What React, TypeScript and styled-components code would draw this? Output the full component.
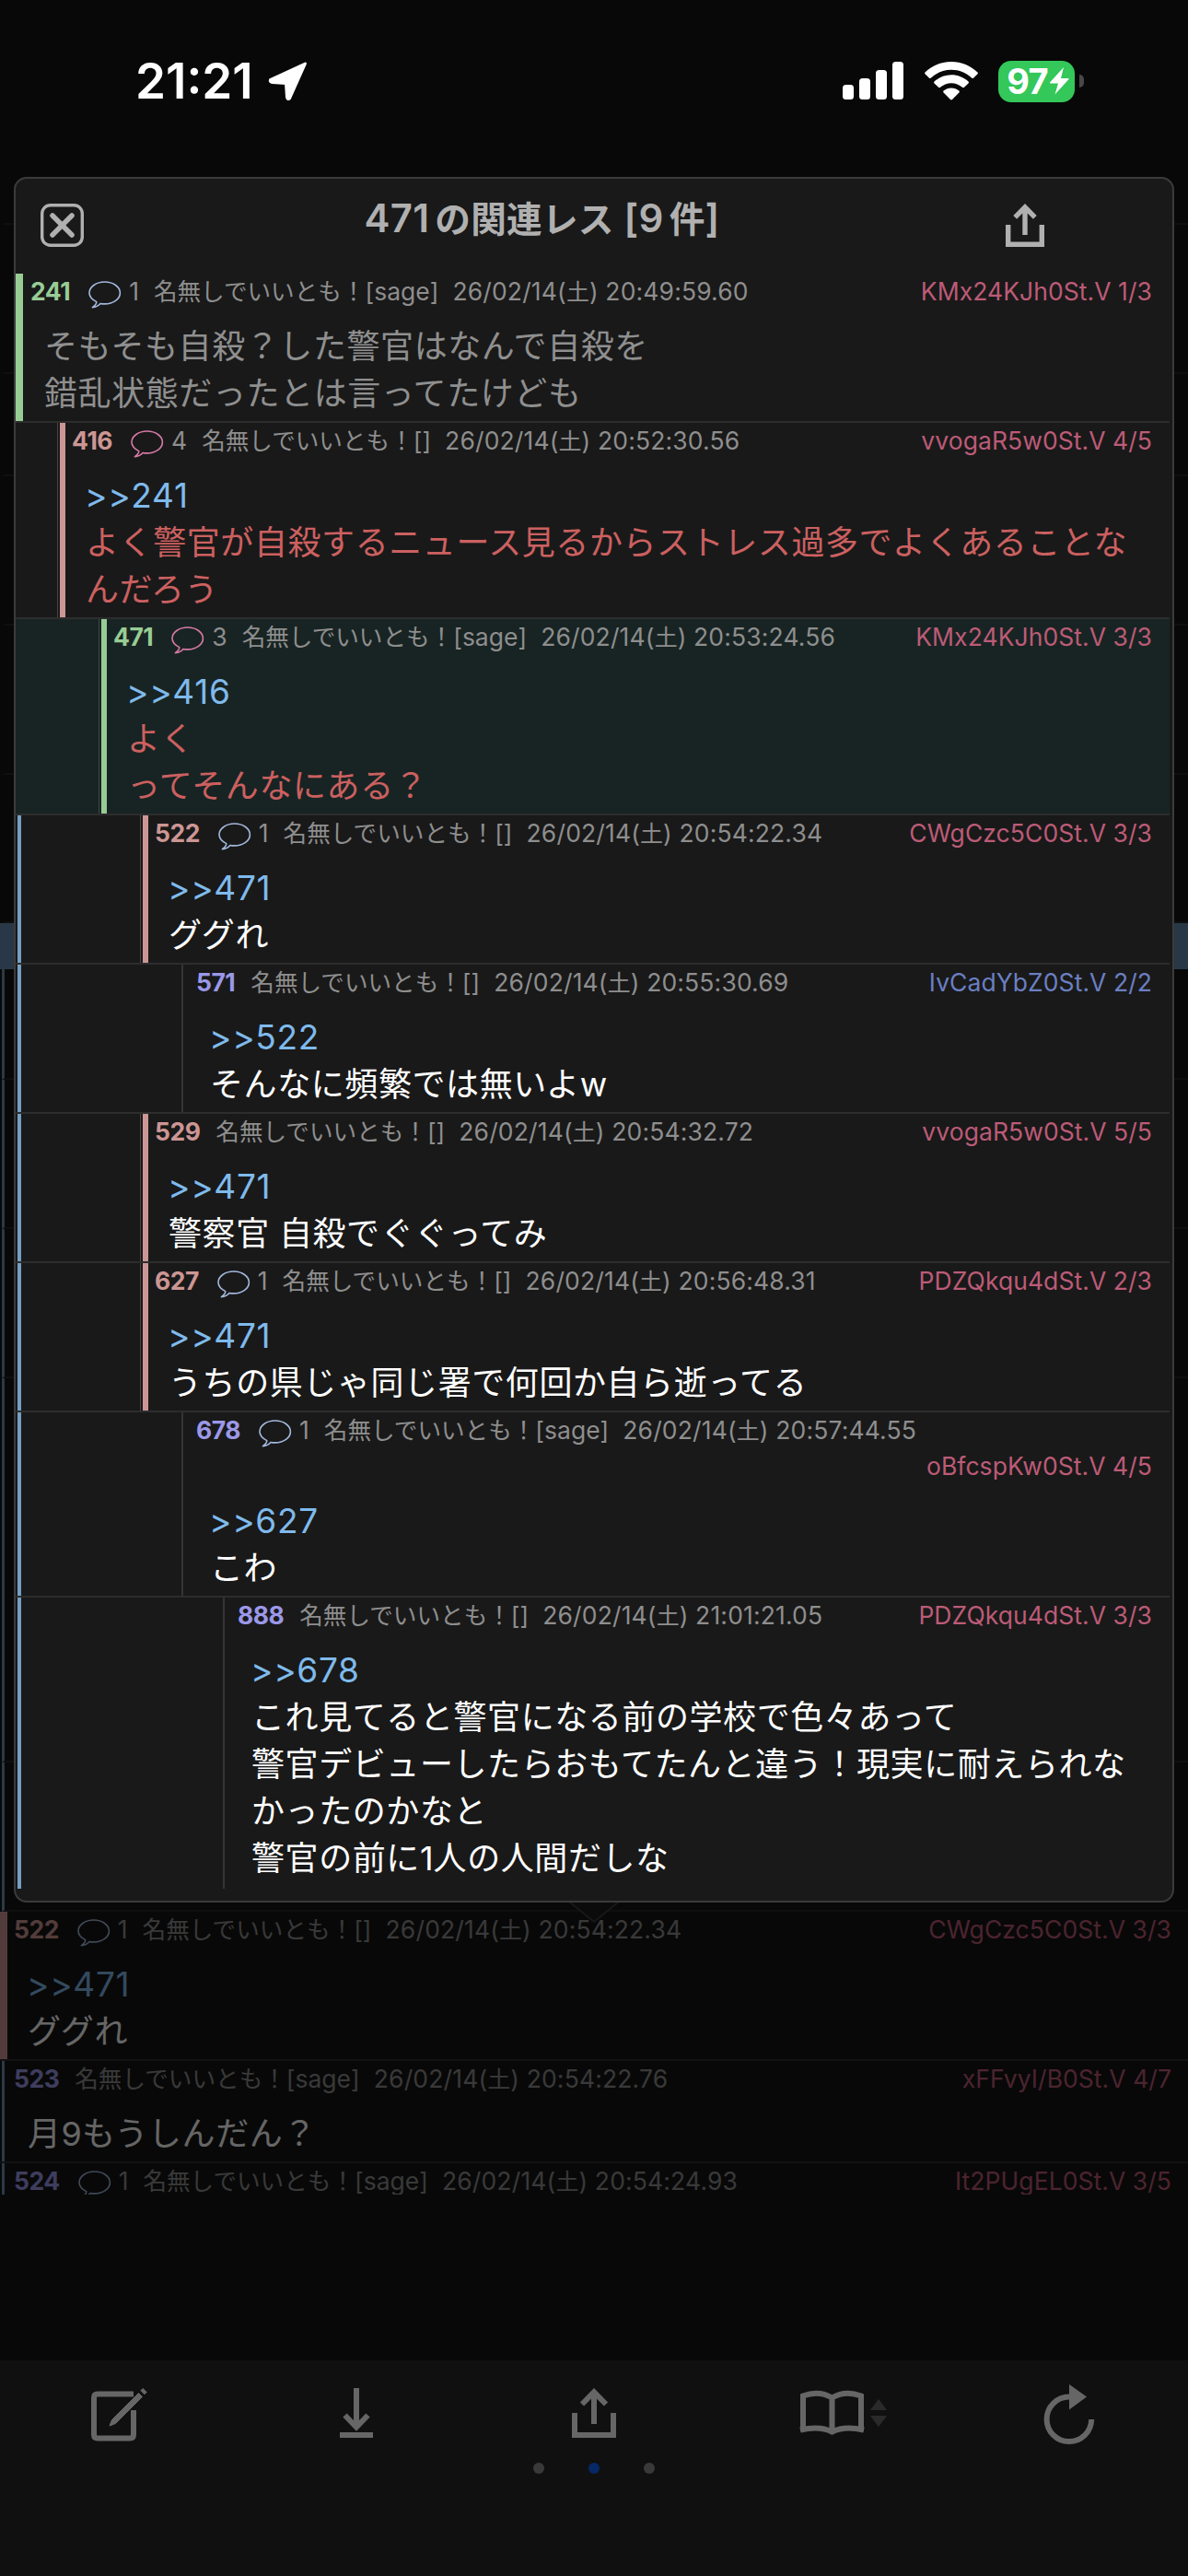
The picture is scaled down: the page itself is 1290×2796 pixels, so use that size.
import React from "react";
import styled, { createGlobalStyle } from "styled-components";

const GlobalStyle = createGlobalStyle`
  * { box-sizing: border-box; }
  html, body { margin: 0; padding: 0; background: #000; }
  body { font-family: Inter, "Noto Sans CJK JP", sans-serif; }
`;

const color = {
  green: "#98cc95",
  rose: "#cc9694",
  violet: "#9b98e8",
  idPink: "#bc5b77",
  idBlue: "#6b7fc2",
  link: "#7fbaec",
  red: "#cc6060",
  read: "#8f8f8f",
  unread: "#ffffff",
  meta: "#8e8e8e",
  panel: "#191919",
  bubbleBlue: "#a3b8dc",
  bubblePink: "#d67aa6",
  trail: "#74a0c4",
};

/* ---------- text ---------- */

const Kana = styled.span<{ $size: number; $track: number; $lead: number }>`
  font-family: "Noto Sans CJK JP", sans-serif;
  font-size: ${(p) => p.$size}px;
  letter-spacing: ${(p) => p.$track}px;
  margin-left: ${(p) => p.$lead}px;
  line-height: 1;
`;

const JAPANESE = /([\u3000-\u30ff\u3400-\u9fff\uff00-\uffef]+)/;

function Mixed({ text, size, track = 0, lead = 0 }: { text: string; size: number; track?: number; lead?: number }) {
  return (
    <>
      {text.split(JAPANESE).map((part, i) =>
        i % 2 ? (
          <Kana key={i} $size={size} $track={track} $lead={lead}>
            {part}
          </Kana>
        ) : (
          part
        )
      )}
    </>
  );
}

/* ---------- frame ---------- */

const Screen = styled.div`
  position: relative;
  width: 1290px;
  height: 2796px;
  overflow: hidden;
  background: #000;
`;

const Dimmed = styled.div`
  display: flex;
  flex-direction: column;
  height: 100%;
  opacity: 0.4;
  background: #161616;
`;

const Thread = styled.main`
  height: 2382px;
  overflow: hidden;
`;

const Blank = styled.div<{ $h: number; $trail?: boolean }>`
  height: ${(p) => p.$h}px;
  border-bottom: 2px solid #262626;
  border-left: ${(p) => (p.$trail ? "3px solid #6b91b1" : "3px solid transparent")};
  margin-left: 2px;
`;

const Unread = styled.div`
  height: 50px;
  background: #648caf;
`;

/* ---------- status bar ---------- */

const StatusBar = styled.header`
  position: absolute;
  inset: 0 0 auto 0;
  height: 176px;
  padding: 0 113px 0 147px;
  display: flex;
  align-items: center;
  justify-content: space-between;
`;

const Clock = styled.div`
  display: flex;
  align-items: center;
  gap: 16px;
  color: #fff;
  font-size: 53px;
  font-weight: 600;
  letter-spacing: 0;
`;

const Signals = styled.div`
  display: flex;
  align-items: center;
  gap: 22.5px;
`;

const Battery = styled.div`
  display: flex;
  align-items: center;
  gap: 5px;
`;

const BatteryBody = styled.div`
  display: flex;
  align-items: center;
  justify-content: center;
  width: 83px;
  height: 45px;
  padding-left: 3px;
  gap: 2px;
  border-radius: 14px;
  background: #34c759;
  color: #fff;
  font-size: 38px;
  font-weight: 700;
  letter-spacing: -0.8px;
`;

const BatteryCap = styled.div`
  width: 5px;
  height: 14px;
  border-radius: 0 5px 5px 0;
  background: #48484a;
`;

/* ---------- popup ---------- */

const Popup = styled.section`
  position: absolute;
  left: 15px;
  top: 192px;
  width: 1260px;
  height: 1873px;
  border: 2px solid #3b3b3b;
  border-radius: 14px;
  background: ${color.panel};
`;

const PopupHead = styled.div`
  display: flex;
  align-items: center;
  height: 101px;
  margin-bottom: 2px;
  padding: 0 139px 0 27px;
  color: #b0b0b0;
`;

const Title = styled.h1`
  flex: 1;
  margin: 0 6px 15px 0;
  text-align: center;
  font-size: 42px;
  font-weight: 600;
  line-height: 50px;
  letter-spacing: 0.3px;
  white-space: nowrap;
`;

const Rows = styled.div`
  display: flex;
  flex-direction: column;
  width: 1253px;
`;

const Pointer = styled.svg`
  position: absolute;
  left: 616px;
  top: 2064px;
`;

/* ---------- post ---------- */

const Row = styled.article<{ $h: number; $active?: boolean; $last?: boolean }>`
  display: flex;
  height: ${(p) => p.$h}px;
  background: ${(p) => (p.$active ? "#182423" : "transparent")};
  border-bottom: ${(p) => (p.$last ? "none" : "2px solid #2d2d2d")};
`;

const Gutter = styled.div<{ $w: number; $trail?: boolean }>`
  width: ${(p) => p.$w}px;
  flex: none;
  border-left: 2px solid transparent;
  &::before {
    content: "";
    display: block;
    width: 4px;
    height: 100%;
    background: ${(p) => (p.$trail ? color.trail : "transparent")};
  }
`;

const Bar = styled.div<{ $w: number; $pad: number; $color: string; $edge?: boolean }>`
  flex: none;
  width: ${(p) => p.$w + (p.$edge ? 3 : 0)}px;
  margin-right: ${(p) => p.$pad}px;
  border-left: ${(p) => (p.$edge ? "1px solid #454545" : "none")};
  background: linear-gradient(${(p) => p.$color}, ${(p) => p.$color}) right / ${(p) => p.$w}px 100% no-repeat;
`;

const Content = styled.div<{ $right: number }>`
  flex: 1;
  min-width: 0;
  padding-right: ${(p) => p.$right}px;
`;

const Meta = styled.div`
  display: flex;
  flex-wrap: wrap;
  align-items: baseline;
  color: ${color.meta};
  font-size: 26.5px;
  line-height: 39px;
  white-space: nowrap;
`;

const PostNumber = styled.span<{ $color: string }>`
  color: ${(p) => p.$color};
  font-weight: 700;
  letter-spacing: -0.5px;
`;

const Replies = styled.span`
  display: inline-flex;
  align-items: baseline;
  gap: 8px;
  margin-left: 20px;
`;

const BubbleSvg = styled.svg`
  align-self: flex-start;
  margin-top: 8px;
`;

const Author = styled.span<{ $near?: boolean }>`
  margin-left: ${(p) => (p.$near ? 16 : 17)}px;
`;

const Stamp = styled.span`
  margin-left: 15px;
  letter-spacing: 0.15px;
`;

const PosterId = styled.span<{ $color: string }>`
  margin-left: auto;
  padding-left: 20px;
  letter-spacing: 0.06px;
  color: ${(p) => p.$color};
`;

const Body = styled.div<{ $color: string }>`
  padding: 15px 0 0 15px;
  color: ${(p) => p.$color};
  font-size: 36px;
  line-height: 51px;
  white-space: nowrap;
`;

const Line = styled.div`
  height: 51px;
`;

const Anchor = styled(Line)`
  margin-left: -1px;
  font-size: 37px;
  line-height: 49px;
  letter-spacing: 0.7px;
  color: ${color.link};
`;

function Bubble({ stroke }: { stroke: string }) {
  return (
    <BubbleSvg width="36" height="30" viewBox="0 0 36 30" fill="none" stroke={stroke} strokeWidth="1.6">
      <path
        d="M8.800 22.600C4 20 1 16.800 1 12.900C1 6.300 8.500 1 17.700 1S34.400 6.300 34.400 12.900S27 24.900 17.700 24.900C16 24.900 14.400 24.800 13 24.400C11 26.800 8 28.300 4.400 28.600C7 27 8.800 25.200 8.800 22.600Z"
        strokeLinejoin="round"
      />
    </BubbleSvg>
  );
}

interface Post {
  no: string;
  noColor: string;
  level?: number;
  replies?: string;
  hot?: boolean;
  sage?: boolean;
  time: string;
  id: string;
  idColor?: string;
  anchor?: string;
  lines: string[];
  tone?: string;
  h: number;
  active?: boolean;
  trail?: boolean;
}

const related: Post[] = [
  { no: "241", noColor: color.green, level: 0, replies: "1", sage: true, time: "20:49:59.60", id: "KMx24KJh0St.V 1/3", lines: ["そもそも自殺？した警官はなんで自殺を", "錯乱状態だったとは言ってたけども"], tone: color.read, h: 162 },
  { no: "416", noColor: color.rose, level: 1, replies: "4", hot: true, time: "20:52:30.56", id: "vvogaR5w0St.V 4/5", anchor: ">>241", lines: ["よく警官が自殺するニュース見るからストレス過多でよくあることな", "んだろう"], tone: color.red, h: 213 },
  { no: "471", noColor: color.green, level: 2, replies: "3", hot: true, sage: true, time: "20:53:24.56", id: "KMx24KJh0St.V 3/3", anchor: ">>416", lines: ["よく", "ってそんなにある？"], tone: color.red, h: 213, active: true },
  { no: "522", noColor: color.rose, level: 3, replies: "1", time: "20:54:22.34", id: "CWgCzc5C0St.V 3/3", anchor: ">>471", lines: ["ググれ"], h: 162, trail: true },
  { no: "571", noColor: color.violet, level: 4, time: "20:55:30.69", id: "IvCadYbZ0St.V 2/2", idColor: color.idBlue, anchor: ">>522", lines: ["そんなに頻繁では無いよw"], h: 162, trail: true },
  { no: "529", noColor: color.rose, level: 3, time: "20:54:32.72", id: "vvogaR5w0St.V 5/5", anchor: ">>471", lines: ["警察官 自殺でぐぐってみ"], h: 162, trail: true },
  { no: "627", noColor: color.rose, level: 3, replies: "1", time: "20:56:48.31", id: "PDZQkqu4dSt.V 2/3", anchor: ">>471", lines: ["うちの県じゃ同じ署で何回か自ら逝ってる"], h: 162, trail: true },
  { no: "678", noColor: color.violet, level: 4, replies: "1", sage: true, time: "20:57:44.55", id: "oBfcspKw0St.V 4/5", anchor: ">>627", lines: ["こわ"], h: 201, trail: true },
  { no: "888", noColor: color.violet, level: 5, time: "21:01:21.05", id: "PDZQkqu4dSt.V 3/3", anchor: ">>678", lines: ["これ見てると警官になる前の学校で色々あって", "警官デビューしたらおもてたんと違う！現実に耐えられな", "かったのかなと", "警官の前に1人の人間だしな"], h: 316, trail: true },
];

const behind: Post[] = [
  { no: "522", noColor: color.rose, replies: "1", time: "20:54:22.34", id: "CWgCzc5C0St.V 3/3", anchor: ">>471", lines: ["ググれ"], h: 162 },
  { no: "523", noColor: color.violet, sage: true, time: "20:54:22.76", id: "xFFvyI/B0St.V 4/7", lines: ["月9もうしんだん？"], h: 111, trail: true },
  { no: "524", noColor: color.violet, replies: "1", sage: true, time: "20:54:24.93", id: "It2PUgEL0St.V 3/5", lines: [], h: 111, trail: true },
];

function PostText({ post, right }: { post: Post; right: number }) {
  return (
    <Content $right={right}>
      <Meta>
        <PostNumber $color={post.noColor}>{post.no}</PostNumber>
        {post.replies && (
          <Replies>
            <Bubble stroke={post.hot ? color.bubblePink : color.bubbleBlue} />
            {post.replies}
          </Replies>
        )}
        <Author $near={!!post.replies}>
          <Mixed size={25.6} text={`名無しでいいとも！[${post.sage ? "sage" : ""}]`} />
        </Author>
        <Stamp>
          <Mixed size={25} text={`26/02/14(土) ${post.time}`} />
        </Stamp>
        <PosterId $color={post.idColor ?? color.idPink}>{post.id}</PosterId>
      </Meta>
      <Body $color={post.tone ?? color.unread}>
        {post.anchor && <Anchor>{post.anchor}</Anchor>}
        {post.lines.map((l) => (
          <Line key={l}>
            <Mixed size={36} track={0.58} text={l} />
          </Line>
        ))}
      </Body>
    </Content>
  );
}

function RelatedRow({ post, last }: { post: Post; last: boolean }) {
  const level = post.level ?? 0;
  const plain = level > 3;
  return (
    <Row $h={post.h} $active={post.active} $last={last}>
      {level > 0 && <Gutter $w={level * 45} $trail={post.trail} />}
      {level === 0 && <Bar $w={8} $pad={8} $color={post.noColor} />}
      {level > 0 && !plain && <Bar $w={6} $pad={7} $color={post.noColor} $edge />}
      {plain && <Bar $w={2} $pad={14} $color="#353535" />}
      <PostText post={post} right={19} />
    </Row>
  );
}

function ThreadRow({ post }: { post: Post }) {
  return (
    <Row $h={post.h}>
      {post.trail ? (
        <>
          <Gutter $w={2} />
          <Bar $w={3} $pad={10} $color="#6b91b1" />
        </>
      ) : (
        <Bar $w={8} $pad={7} $color={post.noColor} />
      )}
      <PostText post={post} right={18} />
    </Row>
  );
}

/* ---------- toolbar ---------- */

const Toolbar = styled.nav`
  margin-top: auto;
  height: 234px;
  background: #2a2a2a;
  color: #fff;
`;

const Tools = styled.div`
  display: grid;
  grid-template-columns: repeat(5, 258px);
  justify-items: center;
  padding-top: 20px;
`;

const Dots = styled.div`
  display: flex;
  justify-content: center;
  gap: 48px;
  padding-top: 1px;
`;

const Dot = styled.i<{ $on?: boolean }>`
  width: 12px;
  height: 12px;
  border-radius: 50%;
  background: ${(p) => (p.$on ? "#1164ff" : "#909090")};
`;

const Icon = styled.svg<{ $stroke?: number }>`
  display: block;
  overflow: visible;
  fill: none;
  stroke: currentColor;
  stroke-width: ${(p) => p.$stroke ?? 6};
`;

const Pencil = styled.path`
  fill: currentColor;
  stroke-width: 1;
`;

const Eraser = styled.path`
  stroke-width: 4;
`;

const Cross = styled.path`
  stroke-width: 5.5;
  stroke-linecap: round;
`;

export default function App() {
  return (
    <>
      <GlobalStyle />
      <Screen>
        <Dimmed>
          <Thread>
            <Blank $h={244} />
            <Blank $h={162} />
            <Blank $h={111} />
            <Blank $h={162} />
            <Blank $h={162} />
            <Blank $h={161} />
            <Unread />
            <Blank $h={120} $trail />
            <Blank $h={162} $trail />
            <Blank $h={162} $trail />
            <Blank $h={417} $trail />
            <Blank $h={162} $trail />
            {behind.map((p) => (
              <ThreadRow key={p.no} post={p} />
            ))}
          </Thread>
          <Toolbar>
            <Tools>
              <Icon width="64" height="90" viewBox="97 2582 64 90">
                <path d="M145 2598.500H106Q102 2598.500 102 2602.500V2642.500Q102 2646.500 106 2646.500H141Q145 2646.500 145 2642.500V2616" />
                <Pencil d="M119 2633L121.500 2626.500L150.500 2597.500L154.500 2601.500L125.500 2630.500Z" />
                <Eraser d="M153.800 2593.300L158.300 2597.800" />
              </Icon>
              <Icon width="36" height="90" viewBox="369 2582 36 90">
                <path d="M387 2592V2634M374.500 2621.500L387 2634.500L399.500 2621.500M369 2643H405" />
              </Icon>
              <Icon width="48" height="90" viewBox="621 2582 48 90">
                <path d="M624 2619V2643H666V2619M645 2631V2596M632 2609.500L645 2596.300L658 2609.500" />
              </Icon>
              <Icon width="90" height="90" viewBox="858 2582 90 90">
                <path d="M872 2639V2600.500Q889 2594 903.500 2602.500Q918 2594 935 2600.500V2639M903.500 2603V2640M869 2637.500Q890 2632.500 903.500 2639.500Q917 2632.500 938 2637.500" />
                <path d="M945 2616L954 2604L963 2616ZM945 2622L954 2634L963 2622Z" fill="#6a6a6a" stroke="none" />
              </Icon>
              <Icon width="56" height="90" viewBox="1133 2582 56 90">
                <path d="M1162 2601.500H1161A24.300 24.300 0 1 0 1185.200 2626" />
                <path d="M1161 2588L1180 2601.500L1161 2615.500Z" fill="currentColor" stroke="none" />
              </Icon>
            </Tools>
            <Dots>
              <Dot />
              <Dot $on />
              <Dot />
            </Dots>
          </Toolbar>
        </Dimmed>

        <Pointer width="58" height="24" viewBox="0 0 58 24" fill="#0b0b0b" stroke="#181818" strokeWidth="2">
          <path d="M2 0L29 22L56 0" />
        </Pointer>

        <StatusBar>
          <Clock>
            21:21
            <svg width="43" height="43" viewBox="0 0 43 43" fill="#fff" stroke="#fff" strokeWidth="3" strokeLinejoin="round">
              <path d="M40.500 2L2.500 19.500Q1.500 22 4.500 22.500L19.500 23.500L20.500 38.500Q21 41.500 23.500 40Z" />
            </svg>
          </Clock>
          <Signals>
            <svg width="66" height="42" viewBox="0 0 66 42" fill="#fff">
              <rect x="0" y="25" width="12" height="16" rx="3.500" />
              <rect x="18" y="18" width="12" height="23" rx="3.500" />
              <rect x="36" y="9" width="12" height="32" rx="3.500" />
              <rect x="54" y="0" width="12" height="41" rx="3.500" />
            </svg>
            <svg width="58" height="42" viewBox="0 0 58 42" fill="#fff">
              <path d="M29 0C40 0 50 4.300 57.500 11.500Q58.300 12.500 57.500 13.300L53 17.700Q52 18.500 51 17.600C45 12 37.500 8.800 29 8.800S13 12 7 17.600Q6 18.500 5 17.700L.5 13.300Q-.3 12.500 .5 11.500C8 4.300 18 0 29 0Z" />
              <path d="M29 14.300C36 14.300 42.500 17 47.500 21.500Q48.400 22.500 47.500 23.400L43 27.800Q42 28.600 41 27.800C37.700 25 33.500 23.200 29 23.200S20.300 25 17 27.800Q16 28.600 15 27.800L10.500 23.400Q9.600 22.500 10.500 21.500C15.500 17 22 14.300 29 14.300Z" />
              <path d="M29 28.500C32 28.500 35 29.600 37.300 31.500Q38.300 32.500 37.400 33.500L30 41Q29 41.900 28 41L20.600 33.500Q19.700 32.500 20.700 31.500C23 29.600 26 28.500 29 28.500Z" />
            </svg>
            <Battery>
              <BatteryBody>
                97
                <svg width="21" height="30" viewBox="0 0 21 30" fill="#fff">
                  <path d="M15 0L0 16.500Q-.2 17.500 1 17.500H9L5.500 29.500L20.500 13Q21 12 20 12H12Z" />
                </svg>
              </BatteryBody>
              <BatteryCap />
            </Battery>
          </Signals>
        </StatusBar>

        <Popup>
          <PopupHead>
            <Icon $stroke={3.4} width="47" height="47" viewBox="0 0 47 47">
              <rect x="1.700" y="1.700" width="43.600" height="43.600" rx="9" />
              <Cross d="M13 13L34 34M34 13L13 34" />
            </Icon>
            <Title>
              <Mixed size={38.7} track={0.2} lead={6} text="471の関連レス [9件]" />
            </Title>
            <Icon $stroke={5.4} width="42" height="47" viewBox="0 0 42 47">
              <path d="M2.700 23V44.300H39.300V23M21 34V4M10.200 14.800L21 3.800L31.800 14.800" />
            </Icon>
          </PopupHead>
          <Rows>
            {related.map((p, i) => (
              <RelatedRow key={p.no} post={p} last={i === related.length - 1} />
            ))}
          </Rows>
        </Popup>
      </Screen>
    </>
  );
}
